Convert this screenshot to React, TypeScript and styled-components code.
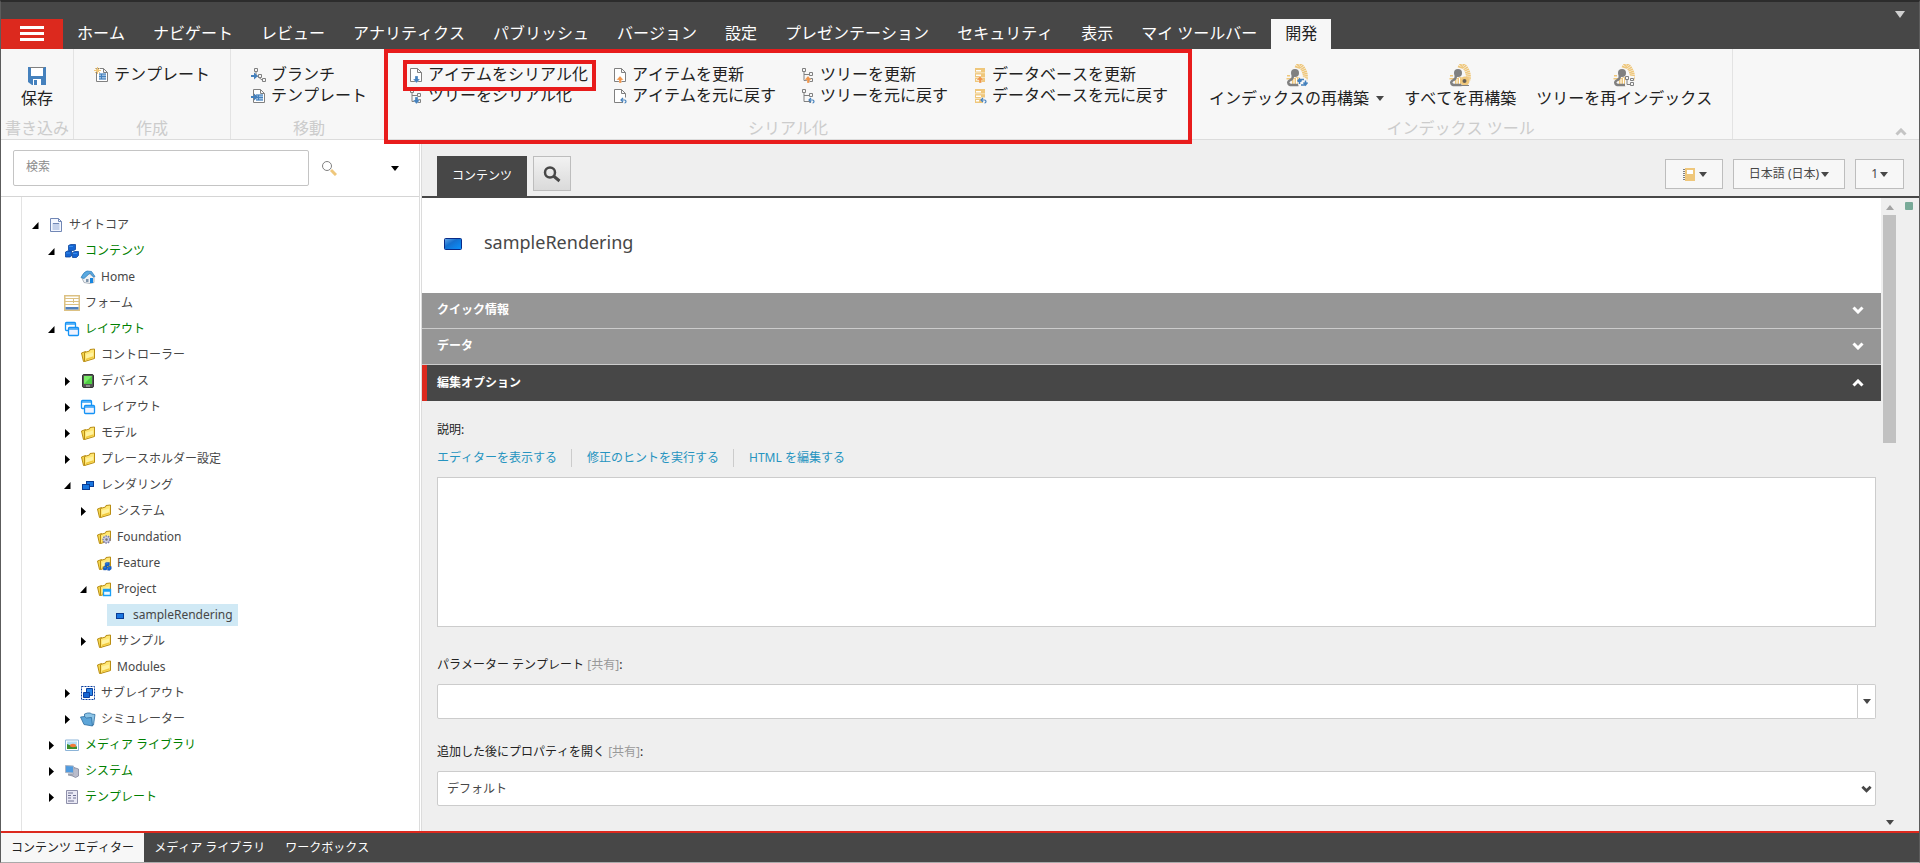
import React from 'react';
import styled, { createGlobalStyle, css } from 'styled-components';

const colors = {
  dark: '#474747',
  red: '#dc291e',
  mark: '#e81c1c',
  ribbon: '#f7f7f7',
  panel: '#efefef',
  line: '#dcdcdc',
  border: '#cccccc',
  link: '#2694c0',
  blue: '#4581bd',
  sand: '#efc77b',
  orange: '#f0954a',
  gray: '#808080',
};

const GlobalStyle = createGlobalStyle`
  *, *::before, *::after { box-sizing: border-box; }
  body {
    margin: 0;
    background: #fff;
    color: ${colors.dark};
    font-family: "Noto Sans", "Noto Sans CJK JP", sans-serif;
    font-size: 12px;
    font-kerning: none;
    line-height: 18px;
  }
  button, input, select, textarea { font: inherit; font-kerning: none; color: inherit; margin: 0; }
  button { border: 0; padding: 0; background: none; cursor: pointer; }
  a { color: inherit; text-decoration: none; }
  ul { list-style: none; margin: 0; padding: 0; }
  h1, h2 { margin: 0; font: inherit; font-kerning: none; }
  svg { display: block; flex: none; }
`;

/* ---------- Window and header ---------- */

const Window = styled.div`
  display: flex;
  flex-direction: column;
  min-height: 100vh;
  border: 1px solid #5c5c5c;
  border-top: 2px solid #2c2c2c;
  border-bottom-color: #aaaaaa;
`;

const Header = styled.header`
  display: flex;
  align-items: flex-end;
  height: 47px;
  background: ${colors.dark};
`;

const MenuButton = styled.button`
  display: flex;
  align-items: center;
  justify-content: center;
  width: 62px;
  height: 30px;
  background: ${colors.red};
`;

const RibbonTab = styled.button<{ $active?: boolean }>`
  height: 30px;
  padding: 0 14px 2px;
  font-size: 16px;
  line-height: 28px;
  white-space: nowrap;
  color: ${(p) => (p.$active ? '#222' : '#fff')};
  background: ${(p) => (p.$active ? colors.ribbon : 'transparent')};
`;

const HeaderArrow = styled.button`
  align-self: flex-start;
  margin: 8px 14px 0 auto;
`;

/* ---------- Ribbon ---------- */

const Ribbon = styled.div`
  display: flex;
  height: 91px;
  background: ${colors.ribbon};
  border-bottom: 1px solid ${colors.line};
`;

const Group = styled.section<{ $pad?: number }>`
  position: relative;
  display: flex;
  flex-direction: column;
  justify-content: space-between;
  padding: 0 ${(p) => p.$pad ?? 8}px;
  border-right: 1px solid #e3e3e3;
`;

const GroupBody = styled.div`
  display: flex;
  padding-top: 15px;
`;

const GroupLabel = styled.h2`
  height: 23px;
  font-size: 16px;
  line-height: 24px;
  text-align: center;
  white-space: nowrap;
  color: #cccccc;
`;

const Stack = styled.div`
  display: flex;
  flex-direction: column;
`;

const SmallButton = styled.button`
  position: relative;
  display: flex;
  align-items: center;
  gap: 4px;
  height: 21px;
  padding: 0 12px;
  font-size: 16px;
  line-height: 21px;
  white-space: nowrap;
  color: #222;
`;

const BigButton = styled.button<{ $wide?: boolean }>`
  display: flex;
  flex-direction: column;
  align-items: center;
  padding: 0 ${(p) => (p.$wide ? '16px' : '10px')};
  font-size: 16px;
  line-height: 21px;
  white-space: nowrap;
  color: #222;
`;

const BigCaption = styled.span`
  display: flex;
  align-items: center;
  gap: 7px;
`;

const GroupMark = styled.span`
  position: absolute;
  inset: 0 -4px -5px -4px;
  border: 4px solid ${colors.mark};
  pointer-events: none;
  z-index: 2;
`;

const ItemMark = styled.span`
  position: absolute;
  inset: -4px 4px -6px 7px;
  border: 4px solid ${colors.mark};
  z-index: 3;
`;

const RibbonCollapse = styled.button`
  align-self: flex-end;
  margin: 0 12px 3px auto;
`;

/* ---------- Left panel ---------- */

const Main = styled.main`
  display: flex;
  flex: 1;
`;

const Sidebar = styled.aside`
  display: flex;
  flex-direction: column;
  flex: none;
  width: 421px;
  background: #fff;
  border-right: 3px double ${colors.line};
`;

const SearchBar = styled.form`
  display: flex;
  align-items: center;
  height: 57px;
  padding: 0 19px 0 12px;
  border-bottom: 1px solid #d5d5d5;
`;

const SearchInput = styled.input`
  width: 296px;
  height: 36px;
  margin-right: 12px;
  padding: 0 12px 4px;
  border: 1px solid #c4c4c4;
  border-radius: 2px;
  &::placeholder { color: #8c8c8c; opacity: 1; }
`;

const SearchMenu = styled.button`
  margin-left: auto;
`;

const Tree = styled.ul`
  flex: 1;
  margin-left: 20px;
  padding: 15px 0 20px;
  border-left: 1px solid #e3e3e3;
`;

const TreeRow = styled.li<{ $level: number }>`
  display: flex;
  align-items: center;
  height: 26px;
  padding-left: ${(p) => 10 + p.$level * 16}px;
`;

const Toggle = styled.button`
  width: 11px;
  height: 11px;
`;

const TreeLink = styled.a<{ $green?: boolean; $selected?: boolean }>`
  display: flex;
  align-items: center;
  gap: 5px;
  height: 22px;
  padding: 0 5px;
  line-height: 22px;
  white-space: nowrap;
  ${(p) => p.$green && css`color: #008000;`}
  ${(p) => p.$selected && css`background: #d0e9f5;`}
`;

/* ---------- Editor ---------- */

const Editor = styled.section`
  display: flex;
  flex-direction: column;
  flex: 1;
  min-width: 0;
  background: ${colors.panel};
`;

const EditorBar = styled.div`
  display: flex;
  align-items: flex-end;
  height: 58px;
  padding: 0 15px;
  border-bottom: 2px solid ${colors.dark};
`;

const EditorTab = styled.button`
  height: 40px;
  padding: 0 15px;
  color: #fff;
  background: ${colors.dark};
`;

const FindButton = styled.button`
  display: flex;
  align-items: center;
  justify-content: center;
  width: 38px;
  height: 35px;
  margin: 0 auto 5px 6px;
  border: 1px solid #bdbdbd;
  background: linear-gradient(#f2f2f2, #dadada);
`;

const BarButton = styled.button`
  display: flex;
  align-items: center;
  gap: 2px;
  height: 30px;
  margin: 0 0 7px 10px;
  padding: 0 15px;
  border: 1px solid #bdbdbd;
  background: ${colors.ribbon};
`;

const EditorBody = styled.div`
  display: flex;
  flex: 1;
`;

const Content = styled.div`
  flex: 1;
  min-width: 0;
`;

const TitleRow = styled.div`
  display: flex;
  align-items: center;
  gap: 22px;
  height: 95px;
  padding: 0 22px 4px;
  background: #fff;
`;

const Title = styled.h1`
  font-size: 18px;
  line-height: 26px;
  padding-bottom: 4px;
`;

const SectionHeader = styled.button<{ $open?: boolean }>`
  display: flex;
  align-items: center;
  justify-content: space-between;
  width: 100%;
  height: 36px;
  padding: 0 17px 1px ${(p) => (p.$open ? '10px' : '15px')};
  border-left: ${(p) => (p.$open ? `5px solid ${colors.red}` : '0')};
  border-bottom: ${(p) => (p.$open ? '0' : '1px solid #cccccc')};
  font-weight: 700;
  color: #fff;
  background: ${(p) => (p.$open ? colors.dark : '#969696')};
`;

const Fields = styled.div`
  padding: 20px 5px 25px 15px;
`;

const Field = styled.div`
  display: flex;
  flex-direction: column;
  gap: 10px;
  & + & { margin-top: 24px; }
`;

const Label = styled.label`
  align-self: flex-start;
  line-height: 18px;
  color: #222;
`;

const Shared = styled.span`
  color: #999;
`;

const FieldLinks = styled.div`
  display: flex;
  color: ${colors.link};
  a + a {
    margin-left: 14px;
    padding-left: 15px;
    border-left: 1px solid ${colors.border};
  }
`;

const TextArea = styled.textarea`
  display: block;
  width: 100%;
  height: 150px;
  margin-bottom: 5px;
  border: 1px solid ${colors.border};
  background: #fff;
  resize: none;
`;

const Combo = styled.div`
  display: flex;
  height: 35px;
`;

const ComboInput = styled.input`
  flex: 1;
  min-width: 0;
  padding: 0 10px;
  border: 1px solid ${colors.border};
  border-radius: 2px 0 0 2px;
`;

const ComboButton = styled.button`
  display: flex;
  align-items: center;
  justify-content: center;
  width: 18px;
  border: 1px solid ${colors.border};
  border-left: 0;
  border-radius: 0 2px 2px 0;
  background: #fff;
`;

const SelectBox = styled.div`
  display: grid;
  align-items: center;
  > * { grid-area: 1 / 1; }
  > svg { justify-self: end; margin-right: 4px; pointer-events: none; }
`;

const Select = styled.select`
  width: 100%;
  height: 35px;
  padding: 0 9px;
  appearance: none;
  border: 1px solid ${colors.border};
  border-radius: 2px;
  background: #fff;
`;

const Scrollbar = styled.div`
  display: flex;
  flex-direction: column;
  align-items: center;
  width: 17px;
  padding: 7px 0 6px;
`;

const Thumb = styled.div`
  width: 13px;
  height: 228px;
  margin: 5px 0 auto;
  background: #c1c1c1;
`;

const Gutter = styled.div`
  width: 21px;
  padding: 4px 7px;
`;

const StatusDot = styled.div`
  width: 8px;
  height: 8px;
  border-radius: 1px;
  background: #78aa98;
`;

/* ---------- Task bar ---------- */

const TaskBar = styled.nav`
  display: flex;
  height: 31px;
  border-top: 2px solid ${colors.red};
  background: ${colors.dark};
`;

const TaskTab = styled.a<{ $active?: boolean }>`
  padding: 0 10px;
  line-height: 30px;
  color: ${(p) => (p.$active ? '#222' : '#fff')};
  background: ${(p) => (p.$active ? colors.ribbon : 'transparent')};
`;

/* ---------- Icons ---------- */

const Icon = ({ size = 16, children }: { size?: number; children: React.ReactNode }) => (
  <svg width={size} height={size} viewBox={`0 0 ${size} ${size}`} fill="none" aria-hidden="true">
    {children}
  </svg>
);

const Caret = ({ color = colors.dark, width = 8 }: { color?: string; width?: number }) => (
  <svg width={width} height={5} viewBox="0 0 8 5" aria-hidden="true">
    <path d="M0 0h8L4 5z" fill={color} />
  </svg>
);

const Chevron = ({ up, color = '#fff', size = 12 }: { up?: boolean; color?: string; size?: number }) => (
  <svg width={size} height={Math.round(size * 0.7)} viewBox="0 0 12 8" fill="none" aria-hidden="true">
    <path d={up ? 'M1.5 6.5 6 2l4.5 4.5' : 'M1.5 1.5 6 6l4.5-4.5'} stroke={color} strokeWidth="3" />
  </svg>
);

const Page = <path d="M2.5 1.5h7l4 4v9h-11zM9.5 1.5v4h4" stroke={colors.gray} fill="#fff" />;
const ArrowDown = <path d="M7 9h3v3h2l-3.500 4L5 12h2z" fill={colors.blue} stroke="#f7f7f7" strokeWidth=".3" />;
const ArrowUp = <path d="M7 16v-3H4.500L8 9l3.500 4H9.500v3z" fill={colors.orange} stroke="#f7f7f7" strokeWidth=".3" />;
const Undo = (
  <g>
    <path d="M8.500 9.500h6v6h-3z" fill="#f7f7f7" />
    <path d="M9.500 12h3q1.500 0 1.500 1.500T12.500 15M11 10l-2 2 2 2" stroke={colors.blue} strokeWidth="1.200" />
  </g>
);
const TreeLines = (
  <path
    d="M2.5 1.5h3v3h-3zM4 4.5v9h5.500M4 7.500h5.500M9.500 5.500h3v3h-3zM9.500 11.500h3v3h-3z"
    stroke={colors.gray}
  />
);
const Database = (
  <g>
    <path d="M3 1h10v14H3z" fill={colors.sand} />
    <path d="M4 3h5v1.500H4zM4 7.500h5V9H4zM4 12h3v1.500H4z" fill="#fff" />
    <path d="M3 5.750h10M3 10.500h10" stroke="#f7e3bb" />
  </g>
);
const DataLines = (
  <g>
    <path d="M5 6.500h7v6H5z" fill="#9dbfe0" />
    <path d="M5 7h7M5 9.500h7M5 12h7M7.500 7v5" stroke={colors.blue} />
  </g>
);
const MoveArrow = <path d="M0 8h3V5.500L7 9l-4 3.500V10H0z" fill={colors.blue} />;

const ribbonIcons: Record<string, React.ReactNode> = {
  template: (<>{Page}{DataLines}<path d="M3.5 0v7M0 3.5h7M1 1l5 5M6 1L1 6" stroke={colors.sand} /></>),
  moveTemplate: (<>{Page}{DataLines}{MoveArrow}</>),
  branch: (
    <>
      <path d="M3.500 1.500h3v3h-3zM5 4.500V8l6 5M7.500 7.500h3v3h-3zM11.500 11.500h3v3h-3z" stroke={colors.gray} />
      {MoveArrow}
    </>
  ),
  itemDown: (<>{Page}{ArrowDown}</>),
  treeDown: (<>{TreeLines}{ArrowDown}</>),
  itemUp: (<>{Page}{ArrowUp}</>),
  itemUndo: (<>{Page}{Undo}</>),
  treeUp: (<>{TreeLines}{ArrowUp}</>),
  treeUndo: (<>{TreeLines}{Undo}</>),
  dbUp: (<>{Database}{ArrowUp}</>),
  dbUndo: (<>{Database}{Undo}</>),
};

const SaveIcon = () => (
  <Icon size={24}>
    <path d="M3 3h18v18H7l-4-3z" fill={colors.blue} />
    <path d="M6 4h12v8H6z" fill="#fff" />
    <path d="M5 3.5h14" stroke={colors.gray} />
    <path d="M8 15h8v6H8z" fill="#fff" />
    <path d="M9 16h3v5H9z" fill={colors.blue} />
  </Icon>
);

const IndexIcon = ({ badge }: { badge: 'sync' | 'db' | 'tree' }) => (
  <Icon size={24}>
    <path d="M12 4q1-3 3-3 3 3 4.500 7t.5 8" stroke={colors.sand} strokeWidth="5" strokeDasharray="1.500 .5" />
    <path d="M2 11h3v1.500H2zM1.500 14h5v1.500h-5z" fill={colors.sand} />
    <path d="M7 15l5-2 4 1v6H7z" fill={colors.sand} />
    <path d="M9 15v5M11.500 14v6M14 14v6" stroke="#fff" />
    <circle cx="10" cy="9" r="4" fill={colors.gray} />
    <path d="M8 11q0 4-2.500 5-3 1.500-2 3.500.5 1.500 3 1.500h7" stroke={colors.gray} strokeWidth="2.500" />
    {badge === 'sync' && (
      <>
        <circle cx="17.500" cy="18" r="5" fill="#f7f7f7" />
        <path d="M14.500 20v-4.500h4.500M20.500 16.500v4.500H16M12.500 17.500l2-2.500 2 2.500M18.500 18.500l2 2.500 2-2.500" stroke={colors.blue} strokeWidth="1.500" />
      </>
    )}
    {badge === 'db' && (
      <>
        <circle cx="17" cy="17" r="4.500" fill={colors.sand} />
        <circle cx="16.500" cy="17" r="2" fill="#666055" />
        <path d="M13 21.500h8" stroke={colors.gray} />
      </>
    )}
    {badge === 'tree' && (
      <>
        <path d="M13 12h9v10h-9z" fill="#f7f7f7" />
        <path d="M13.500 12.500h3v3h-3zM15 15.500V20.500h3M18.500 14.500h3v2h-3zM18.500 18.500h3v3h-3z" stroke={colors.gray} />
      </>
    )}
  </Icon>
);

const FolderShape = (
  <g strokeLinejoin="round">
    <path d="M1.500 6l4-1.500V14l-2 .5z" fill="#f6d84f" stroke="#b98d14" />
    <path d="M4.500 5.500L9.500 4l.5-1.500 4.500-.5v9.500l-10 3z" fill="#ffe774" stroke="#b98d14" />
    <path d="M6 7.500l7-2v5L6 13z" fill="#fff2a0" />
    <path d="M6 12.500l7.500-2.500" stroke="#f2c93d" strokeWidth="1.500" />
  </g>
);
const Screens = (
  <g stroke="#1593f5" strokeWidth="1.300">
    <rect x="1.500" y="1.500" width="10" height="8" rx="1" fill="#fff" />
    <path d="M2 3h9" />
    <rect x="4.500" y="6.500" width="10" height="8" rx="1" fill="#f0f3ff" />
    <path d="M5 8h9" />
  </g>
);
const Cubes = (
  <g fill="#1464d2" stroke="#0b459c" strokeWidth=".8">
    <path d="M4.500 2.500l2-1h5v5l-2 1h-5zM1.500 9l2-1h4v5l-1.500 1h-4.500zM8.500 9.500l2-1h4v4l-2 2h-4z" />
    <path d="M5 3.500h4M2 10h4M9 10.500h4" stroke="#3c93f0" />
  </g>
);

const treeIcons: Record<string, React.ReactNode> = {
  document: (
    <>
      <path d="M2.500 1.500h8l3 3v10h-11z" fill="#f4f7ff" stroke="#7187b5" />
      <path d="M4.500 6h7v7h-7z" fill="#c3d0ea" />
      <path d="M10.500 1.500v3h3M5 6.500h6" stroke="#7187b5" />
    </>
  ),
  cubes: Cubes,
  home: (
    <>
      <path d="M2 9l6-5 6 4v5.500l-4 1-6-1z" fill="#eef1f4" stroke="#9aa5b0" strokeWidth=".8" />
      <path d="M1 8.500Q4 2.500 7 2l4.500.5 3.500 5-1.500.5-3.500-4L4 9.500z" fill="#5aa9e0" stroke="#2878b8" strokeWidth=".7" />
      <path d="M6 10h2.500v3H6z" fill="#7d93aa" />
      <path d="M10 9h3v5h-3z" fill="#1686e0" />
    </>
  ),
  form: (
    <>
      <path d="M.75.75h14.500v14.500H.75z" fill="#fff" stroke="#dcc183" strokeWidth="1.500" />
      <path d="M1 3.500h14M1 6.500h14M1 9.500h14M9.500 4v4" stroke="#dcc183" />
      <path d="M1.500 12h13v2.500h-13z" fill="#5080bd" />
    </>
  ),
  screens: Screens,
  folder: FolderShape,
  device: (
    <>
      <rect x="2.500" y="1.500" width="11" height="13" rx="1.500" fill="#555" stroke="#333" />
      <path d="M4 3h8v8H4z" fill="#7bea68" />
      <path d="M4 11l8-8v8z" fill="#4fce44" />
      <path d="M6 13h4" stroke="#ccc" />
    </>
  ),
  renderings: (
    <g fill="#1976e0" stroke="#0a3b92">
      <rect x="6.500" y="4.500" width="7" height="5" />
      <rect x="2.500" y="7.500" width="7" height="5" />
    </g>
  ),
  folderGear: (
    <>
      {FolderShape}
      <circle cx="10.500" cy="10.500" r="3.500" fill="#c9cbe6" stroke="#7c7ea8" strokeDasharray="1.500 1" strokeWidth="1.500" />
      <circle cx="10.500" cy="10.500" r="1.200" fill="#777" />
    </>
  ),
  folderCubes: (<>{FolderShape}<g transform="translate(6.500 6.500) scale(.6)">{Cubes}</g></>),
  folderScreen: (<>{FolderShape}<path d="M7.500 8.500h7v6h-7zM7.500 10h7" fill="#eef8ff" stroke="#1aa0f5" strokeWidth="1.300" /></>),
  rendering: <rect x="4.500" y="6.500" width="7" height="5" fill="#1976e0" stroke="#0a3b92" />,
  sublayout: (
    <>
      <path d="M1.500 1.500h13v13h-13z" stroke="#0b3f9e" strokeDasharray="2 1" />
      <path d="M6.500 3.500h6v7h-6z" fill="#2d87e8" stroke="#0b3f9e" />
      <path d="M3.500 7.500h6v5h-6z" fill="#1464d2" stroke="#0b3f9e" />
    </>
  ),
  blueFolder: (
    <g stroke="#2e6da0" strokeWidth=".8" strokeLinejoin="round">
      <path d="M4.500 6.500V3l3-1h3l1 1 3.500.5-1.500 10.500-2 .5z" fill="#8cc4e6" />
      <path d="M.5 6l4-.5 2 1.500 5-.5 1 8.500-8.500-1.500z" fill="#5da5d8" />
    </g>
  ),
  media: (
    <>
      <path d="M1.500 3h13v10.500h-13z" fill="#fff" stroke="#8cb4d8" />
      <path d="M3 4.500h10V12H3z" fill="#b5dcf5" />
      <path d="M3 7l5 2 5 .5V12H3z" fill="#3b8f2c" />
      <ellipse cx="9" cy="8.500" rx="3" ry="1.700" fill="#f2793a" />
    </>
  ),
  system: (
    <>
      <path d="M10 4.500l4.500 1.500v7l-3 1.500-3-1.500z" fill="#b9bccb" stroke="#81859b" strokeWidth=".8" />
      <path d="M1.500 2.500l8 .5v7l-8-.5z" fill="#4f9be0" stroke="#aab4c4" />
      <path d="M4 10.500h4l1 3-5-1z" fill="#9aa0ae" />
    </>
  ),
  templateDoc: (
    <>
      <path d="M2.500 1.500h11v13h-11z" fill="#e9e9f5" stroke="#8f90aa" />
      <path d="M4 4h5M4 6.500h3M9 6.500h3M4 9h3M9 9h3M4 12h6" stroke="#6e7092" />
    </>
  ),
};

const NotebookIcon = () => (
  <Icon size={16}>
    <path d="M4 2h10v13H4z" fill={colors.sand} />
    <path d="M6 4h6v4H6z" fill="#fff" />
    <path d="M3 3v12" stroke={colors.gray} strokeWidth="2" strokeDasharray="1 1" />
  </Icon>
);

/* ---------- Data ---------- */

const tabs = ['ホーム', 'ナビゲート', 'レビュー', 'アナリティクス', 'パブリッシュ', 'バージョン', '設定', 'プレゼンテーション', 'セキュリティ', '表示', 'マイ ツールバー', '開発'];

type Command = { icon: string; text: string; marked?: boolean };
type CommandGroup = { label: string; marked?: boolean; columns: Command[][] };

const groups: CommandGroup[] = [
  { label: '作成', columns: [[{ icon: 'template', text: 'テンプレート' }]] },
  { label: '移動', columns: [[{ icon: 'branch', text: 'ブランチ' }, { icon: 'moveTemplate', text: 'テンプレート' }]] },
  {
    label: 'シリアル化',
    marked: true,
    columns: [
      [{ icon: 'itemDown', text: 'アイテムをシリアル化', marked: true }, { icon: 'treeDown', text: 'ツリーをシリアル化' }],
      [{ icon: 'itemUp', text: 'アイテムを更新' }, { icon: 'itemUndo', text: 'アイテムを元に戻す' }],
      [{ icon: 'treeUp', text: 'ツリーを更新' }, { icon: 'treeUndo', text: 'ツリーを元に戻す' }],
      [{ icon: 'dbUp', text: 'データベースを更新' }, { icon: 'dbUndo', text: 'データベースを元に戻す' }],
    ],
  },
];

type Node = { level: number; icon: string; text: string; state?: 'open' | 'closed'; green?: boolean; selected?: boolean };

const nodes: Node[] = [
  { level: 0, icon: 'document', text: 'サイトコア', state: 'open' },
  { level: 1, icon: 'cubes', text: 'コンテンツ', state: 'open', green: true },
  { level: 2, icon: 'home', text: 'Home' },
  { level: 1, icon: 'form', text: 'フォーム' },
  { level: 1, icon: 'screens', text: 'レイアウト', state: 'open', green: true },
  { level: 2, icon: 'folder', text: 'コントローラー' },
  { level: 2, icon: 'device', text: 'デバイス', state: 'closed' },
  { level: 2, icon: 'screens', text: 'レイアウト', state: 'closed' },
  { level: 2, icon: 'folder', text: 'モデル', state: 'closed' },
  { level: 2, icon: 'folder', text: 'プレースホルダー設定', state: 'closed' },
  { level: 2, icon: 'renderings', text: 'レンダリング', state: 'open' },
  { level: 3, icon: 'folder', text: 'システム', state: 'closed' },
  { level: 3, icon: 'folderGear', text: 'Foundation' },
  { level: 3, icon: 'folderCubes', text: 'Feature' },
  { level: 3, icon: 'folderScreen', text: 'Project', state: 'open' },
  { level: 4, icon: 'rendering', text: 'sampleRendering', selected: true },
  { level: 3, icon: 'folder', text: 'サンプル', state: 'closed' },
  { level: 3, icon: 'folder', text: 'Modules' },
  { level: 2, icon: 'sublayout', text: 'サブレイアウト', state: 'closed' },
  { level: 2, icon: 'blueFolder', text: 'シミュレーター', state: 'closed' },
  { level: 1, icon: 'media', text: 'メディア ライブラリ', state: 'closed', green: true },
  { level: 1, icon: 'system', text: 'システム', state: 'closed', green: true },
  { level: 1, icon: 'templateDoc', text: 'テンプレート', state: 'closed', green: true },
];

/* ---------- Page ---------- */

export default function App() {
  return (
    <Window>
      <GlobalStyle />
      <Header>
        <MenuButton aria-label="メニュー">
          <svg width="24" height="16" viewBox="0 0 24 16" aria-hidden="true">
            <path d="M0 0h24v3H0zM0 6h24v3H0zM0 12h24v3H0z" fill="#fff" />
          </svg>
        </MenuButton>
        {tabs.map((t) => (
          <RibbonTab key={t} $active={t === '開発'}>{t}</RibbonTab>
        ))}
        <HeaderArrow aria-label="オプション">
          <svg width="10" height="8" viewBox="0 0 10 8" aria-hidden="true">
            <path d="M0 1h10L5 8z" fill="#d0d0d0" />
          </svg>
        </HeaderArrow>
      </Header>

      <Ribbon>
        <Group $pad={4}>
          <GroupBody>
            <BigButton $wide>
              <SaveIcon />
              <span>保存</span>
            </BigButton>
          </GroupBody>
          <GroupLabel>書き込み</GroupLabel>
        </Group>
        {groups.map((g) => (
          <Group key={g.label}>
            <GroupBody>
              {g.columns.map((col, i) => (
                <Stack key={i}>
                  {col.map((c) => (
                    <SmallButton key={c.text}>
                      <Icon>{ribbonIcons[c.icon]}</Icon>
                      {c.text}
                      {c.marked && <ItemMark />}
                    </SmallButton>
                  ))}
                </Stack>
              ))}
            </GroupBody>
            <GroupLabel>{g.label}</GroupLabel>
            {g.marked && <GroupMark />}
          </Group>
        ))}
        <Group $pad={10}>
          <GroupBody>
            <BigButton>
              <IndexIcon badge="sync" />
              <BigCaption>インデックスの再構築<Caret /></BigCaption>
            </BigButton>
            <BigButton>
              <IndexIcon badge="db" />
              <span>すべてを再構築</span>
            </BigButton>
            <BigButton>
              <IndexIcon badge="tree" />
              <span>ツリーを再インデックス</span>
            </BigButton>
          </GroupBody>
          <GroupLabel>インデックス ツール</GroupLabel>
        </Group>
        <RibbonCollapse aria-label="リボンを閉じる"><Chevron up color="#c4c4c4" /></RibbonCollapse>
      </Ribbon>

      <Main>
        <Sidebar>
          <SearchBar>
            <SearchInput placeholder="検索" aria-label="検索" />
            <button type="button" aria-label="検索を実行">
              <Icon>
                <circle cx="6" cy="6" r="4.500" stroke={colors.gray} />
                <path d="M10 10l5 5" stroke={colors.sand} strokeWidth="3" />
              </Icon>
            </button>
            <SearchMenu type="button" aria-label="検索オプション"><Caret color="#000" width={10} /></SearchMenu>
          </SearchBar>
          <Tree>
            {nodes.map((n, i) => (
              <TreeRow key={i} $level={n.level}>
                <Toggle aria-label={n.state ? `${n.text} の切り替え` : undefined} disabled={!n.state}>
                  {n.state && (
                    <svg width="11" height="11" viewBox="0 0 11 11" aria-hidden="true">
                      <path d={n.state === 'open' ? 'M6.500 2v7H0z' : 'M1 1l5 4.500L1 10z'} fill="#000" />
                    </svg>
                  )}
                </Toggle>
                <TreeLink href="#" $green={n.green} $selected={n.selected}>
                  <Icon>{treeIcons[n.icon]}</Icon>
                  {n.text}
                </TreeLink>
              </TreeRow>
            ))}
          </Tree>
        </Sidebar>

        <Editor>
          <EditorBar>
            <EditorTab>コンテンツ</EditorTab>
            <FindButton aria-label="検索">
              <Icon size={18}>
                <circle cx="7" cy="7.500" r="5" stroke={colors.dark} strokeWidth="2.500" />
                <path d="M10.500 11l6 5" stroke={colors.dark} strokeWidth="3" />
              </Icon>
            </FindButton>
            <BarButton aria-label="ノート"><NotebookIcon /><Caret /></BarButton>
            <BarButton>日本語 (日本)<Caret /></BarButton>
            <BarButton>1<Caret /></BarButton>
          </EditorBar>
          <EditorBody>
            <Content>
              <TitleRow>
                <svg width="18" height="12" viewBox="0 0 18 12" aria-hidden="true">
                  <defs>
                    <linearGradient id="blue" x1="0" y1="0" x2="1" y2="1">
                      <stop offset="0" stopColor="#6aa9e8" />
                      <stop offset=".4" stopColor="#1470d0" />
                      <stop offset="1" stopColor="#0a93ff" />
                    </linearGradient>
                  </defs>
                  <rect x=".5" y=".5" width="17" height="11" rx="1" fill="url(#blue)" stroke="#0a2a86" />
                </svg>
                <Title>sampleRendering</Title>
              </TitleRow>
              <SectionHeader>クイック情報<Chevron /></SectionHeader>
              <SectionHeader>データ<Chevron /></SectionHeader>
              <SectionHeader $open>編集オプション<Chevron up /></SectionHeader>
              <Fields>
                <Field>
                  <Label htmlFor="description">説明:</Label>
                  <FieldLinks>
                    <a href="#">エディターを表示する</a>
                    <a href="#">修正のヒントを実行する</a>
                    <a href="#">HTML を編集する</a>
                  </FieldLinks>
                  <TextArea id="description" />
                </Field>
                <Field>
                  <Label htmlFor="parameters">パラメーター テンプレート <Shared>[共有]</Shared>:</Label>
                  <Combo>
                    <ComboInput id="parameters" />
                    <ComboButton aria-label="一覧を開く"><Caret /></ComboButton>
                  </Combo>
                </Field>
                <Field>
                  <Label htmlFor="properties">追加した後にプロパティを開く <Shared>[共有]</Shared>:</Label>
                  <SelectBox>
                    <Select id="properties"><option>デフォルト</option></Select>
                    <Chevron color={colors.dark} size={11} />
                  </SelectBox>
                </Field>
              </Fields>
            </Content>
            <Scrollbar>
              <svg width="8" height="5" viewBox="0 0 8 5" aria-hidden="true"><path d="M0 5h8L4 0z" fill="#a3a3a3" /></svg>
              <Thumb />
              <Caret />
            </Scrollbar>
            <Gutter><StatusDot /></Gutter>
          </EditorBody>
        </Editor>
      </Main>

      <TaskBar>
        <TaskTab href="#" $active>コンテンツ エディター</TaskTab>
        <TaskTab href="#">メディア ライブラリ</TaskTab>
        <TaskTab href="#">ワークボックス</TaskTab>
      </TaskBar>
    </Window>
  );
}
